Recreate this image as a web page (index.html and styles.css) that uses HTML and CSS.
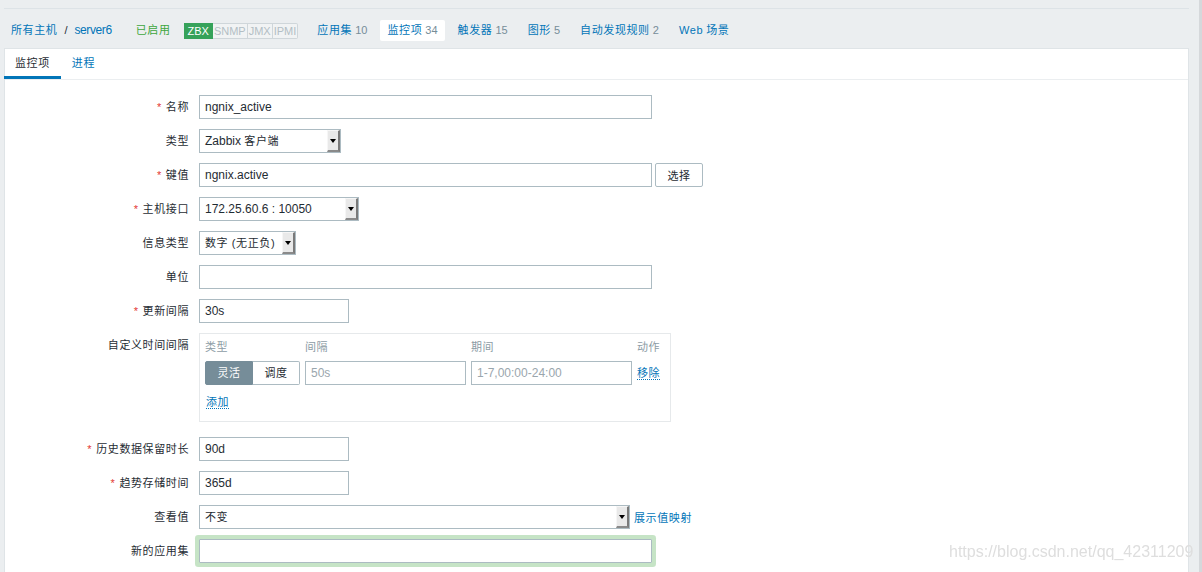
FILE: index.html
```html
<!DOCTYPE html>
<html lang="zh-CN">
<head>
<meta charset="utf-8">
<title>监控项</title>
<link rel="stylesheet" href="styles.css">
</head>
<body>
<div class="page">
  <header class="host-nav">
    <div class="breadcrumb"><a class="link cn">所有主机</a><span class="sep">/</span><a class="link host">server6</a></div>
    <span class="status-on cn">已启用</span>
    <span class="badges"><span class="badge zbx">ZBX</span><span class="badge off">SNMP</span><span class="badge off">JMX</span><span class="badge off">IPMI</span></span>
    <a class="nav-item"><span class="cn">应用集</span> <span class="count">10</span></a>
    <a class="nav-item active"><span class="cn">监控项</span> <span class="count">34</span></a>
    <a class="nav-item"><span class="cn">触发器</span> <span class="count">15</span></a>
    <a class="nav-item"><span class="cn">图形</span> <span class="count">5</span></a>
    <a class="nav-item"><span class="cn">自动发现规则</span> <span class="count">2</span></a>
    <a class="nav-item"><span class="web">Web</span> <span class="cn">场景</span></a>
  </header>

  <div class="panel">
    <ul class="tabs">
      <li class="tab active">监控项</li>
      <li class="tab">进程</li>
    </ul>

    <div class="form">
      <label class="lbl req">名称</label>
      <div class="field"><input class="input w453" value="ngnix_active"></div>

      <label class="lbl">类型</label>
      <div class="field"><div class="select w142"><span class="sel-text">Zabbix <span class="cn">客户端</span></span><span class="arrow"></span></div></div>

      <label class="lbl req">键值</label>
      <div class="field"><input class="input w453" value="ngnix.active"><button class="btn cn">选择</button></div>

      <label class="lbl req">主机接口</label>
      <div class="field"><div class="select w160"><span class="sel-text">172.25.60.6 : 10050</span><span class="arrow"></span></div></div>

      <label class="lbl">信息类型</label>
      <div class="field"><div class="select w97"><span class="sel-text cn">数字 (无正负)</span><span class="arrow"></span></div></div>

      <label class="lbl">单位</label>
      <div class="field"><input class="input w453" value=""></div>

      <label class="lbl req">更新间隔</label>
      <div class="field"><input class="input w150" value="30s"></div>

      <label class="lbl">自定义时间间隔</label>
      <div class="field">
        <div class="intervals">
          <div class="ih cn">类型</div>
          <div class="ih cn">间隔</div>
          <div class="ih cn">期间</div>
          <div class="ih cn">动作</div>
          <div class="seg"><span class="seg-btn on cn">灵活</span><span class="seg-btn cn">调度</span></div>
          <input class="input w161" placeholder="50s">
          <input class="input w161" placeholder="1-7,00:00-24:00">
          <div class="act"><a class="dotted cn">移除</a></div>
          <div class="add"><a class="dotted cn">添加</a></div>
        </div>
      </div>

      <label class="lbl req">历史数据保留时长</label>
      <div class="field"><input class="input w150" value="90d"></div>

      <label class="lbl req">趋势存储时间</label>
      <div class="field"><input class="input w150" value="365d"></div>

      <label class="lbl">查看值</label>
      <div class="field"><div class="select w431"><span class="sel-text cn">不变</span><span class="arrow"></span></div><a class="link map cn">展示值映射</a></div>

      <label class="lbl">新的应用集</label>
      <div class="field"><input class="input w453 focus" value=""></div>
    </div>
  </div>
</div>
<div class="watermark">https://blog.csdn.net/qq_42311209</div>
<div class="scrollbar"></div>
</body>
</html>
```

FILE: styles.css
```css
html, body {
  margin: 0;
  height: 100%;
  overflow: hidden;
}
body {
  background: #ebeef0;
  font-family: "Liberation Sans", "Noto Sans CJK SC", sans-serif;
  font-size: 12px;
  color: #1f2c33;
}
.cn {
  font-size: 11px;
  letter-spacing: 0.6px;
}
.page {
  padding: 8px 13px 0 4px;
}

/* host navigation */
.host-nav {
  display: flex;
  align-items: center;
  border-top: 1px solid #dde3e7;
  padding: 11px 0 7px;
  height: 21px;
  font-size: 11px;
  line-height: 21px;
  white-space: nowrap;
}
.breadcrumb {
  margin-left: 7px;
  display: flex;
  align-items: center;
}
.link {
  color: #0275b8;
  text-decoration: none;
}
.host {
  font-size: 12px;
  letter-spacing: -0.4px;
}
.sep {
  margin: 0 7px 0 7px;
  color: #1f2c33;
}
.status-on {
  color: #3da63d;
  margin-left: 24px;
}
.badges {
  display: flex;
  margin-left: 13px;
  margin-right: 12px;
  height: 16px;
  line-height: 14px;
}
.badge {
  box-sizing: border-box;
  height: 16px;
  padding: 0 1px;
  border: 1px solid #cfd6da;
  font-size: 11px;
}
.badge.zbx {
  background: #36a25a;
  border-color: #36a25a;
  color: #fff;
  padding: 0 3px;
}
.badge.off {
  background: #f1f3f4;
  color: #b3bec4;
  border-left: none;
}
.badge.off:last-child {
  border-radius: 0 2px 2px 0;
}
.nav-item {
  padding: 0 7px;
  margin-right: 6px;
  color: #0275b8;
  text-decoration: none;
  height: 21px;
}
.nav-item.active {
  background: #fff;
  border-radius: 2px;
}
.count {
  color: #768d99;
}
.web {
  letter-spacing: 0.6px;
}

/* panel */
.panel {
  background: #fff;
  border: 1px solid #dfe4e7;
  height: 600px;
}
.tabs {
  display: flex;
  margin: 0;
  padding: 0;
  list-style: none;
  border-bottom: 1px solid #ebeef0;
}
.tab {
  padding: 2px 11px 0;
  line-height: 25px;
  border-bottom: 3px solid transparent;
  font-size: 11px;
  letter-spacing: 0.6px;
  color: #0275b8;
}
.tab.active {
  border-bottom-color: #0275b8;
  color: #1f2c33;
  margin-left: -1px;
}

/* form */
.form {
  display: grid;
  grid-template-columns: 184px auto;
  column-gap: 10px;
  row-gap: 10px;
  padding: 15px 0 20px;
  align-items: start;
}
.lbl {
  text-align: right;
  line-height: 24px;
  font-size: 11px;
  letter-spacing: 0.6px;
  white-space: nowrap;
  color: #1f2c33;
}
.req::before {
  content: "*";
  color: #e33734;
  margin-right: 4px;
  font-family: "Liberation Sans", sans-serif;
  font-size: 11px;
}
.field {
  display: flex;
  align-items: center;
  min-height: 24px;
}
.input {
  box-sizing: border-box;
  height: 24px;
  border: 1px solid #acbbc2;
  padding: 0 5px;
  margin: 0;
  font-family: "Liberation Sans", "Noto Sans CJK SC", sans-serif;
  font-size: 12px;
  color: #1f2c33;
  background: #fff;
  outline: none;
}
.input::placeholder {
  color: #9aa6ad;
}
.w453 { width: 453px; }
.w150 { width: 150px; }
.w161 { width: 161px; }
.w142 { width: 142px; }
.w160 { width: 160px; }
.w97 { width: 97px; }
.w431 { width: 431px; }
.focus {
  box-shadow: 0 0 0 4px #c6e4c6;
  border-radius: 1px;
}

.select {
  box-sizing: border-box;
  height: 24px;
  border: 1px solid #acbbc2;
  display: flex;
  align-items: stretch;
  background: #fff;
}
.sel-text {
  flex: 1;
  padding-left: 5px;
  line-height: 22px;
  white-space: nowrap;
  overflow: hidden;
}
.arrow {
  box-sizing: border-box;
  width: 13px;
  position: relative;
  background: #e9e9e9;
  border-left: 1px solid #f6f6f6;
  border-top: 1px solid #f6f6f6;
  border-right: 2px solid #7a7a7a;
  border-bottom: 2px solid #8a8a8a;
}
.arrow::after {
  content: "";
  position: absolute;
  left: 2px;
  top: 8px;
  border-left: 3px solid transparent;
  border-right: 3px solid transparent;
  border-top: 4px solid #000;
}
.btn {
  box-sizing: border-box;
  height: 24px;
  width: 48px;
  margin-left: 3px;
  border: 1px solid #acbbc2;
  border-radius: 2px;
  background: #fff;
  color: #1f2c33;
  font-family: "Liberation Sans", "Noto Sans CJK SC", sans-serif;
  padding: 0;
}
.map {
  margin-left: 4px;
}

/* custom intervals */
.intervals {
  box-sizing: border-box;
  width: 472px;
  border: 1px solid #e6e9eb;
  padding: 4px 5px 10px 5px;
  margin-bottom: 5px;
  display: grid;
  grid-template-columns: 95px 161px 161px auto;
  column-gap: 5px;
  row-gap: 5px;
  align-items: center;
}
.ih {
  line-height: 18px;
  color: #8d9ca5;
}
.seg {
  display: flex;
  height: 24px;
}
.seg-btn {
  box-sizing: border-box;
  height: 24px;
  line-height: 22px;
  text-align: center;
  border: 1px solid #acbbc2;
  background: #fff;
  color: #1f2c33;
}
.seg-btn.on {
  width: 48px;
  background: #768d99;
  border-color: #768d99;
  color: #fff;
  border-radius: 2px 0 0 2px;
}
.seg-btn:not(.on) {
  width: 47px;
  border-left: none;
  border-radius: 0 2px 2px 0;
}
.act {
  line-height: 18px;
}
.dotted {
  color: #0275b8;
  border-bottom: 1px dotted #0275b8;
  text-decoration: none;
}
.add {
  grid-column: 1 / -1;
  margin-top: 3px;
  line-height: 18px;
  padding-left: 1px;
}

/* overlays */
.watermark {
  position: fixed;
  left: 949px;
  top: 543px;
  font-family: "Liberation Sans", sans-serif;
  font-size: 16px;
  color: #dedede;
  white-space: nowrap;
}
.scrollbar {
  position: fixed;
  right: 0;
  top: 0;
  width: 3px;
  height: 100%;
  background: #d5d8db;
}
```
